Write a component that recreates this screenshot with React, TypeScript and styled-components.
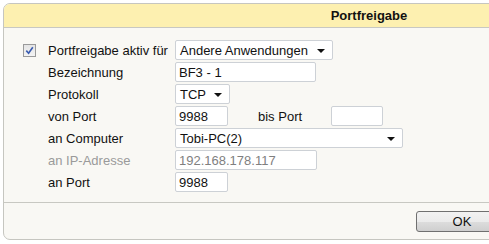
import React from "react";
import styled, { createGlobalStyle } from "styled-components";

const Global = createGlobalStyle`
  html, body { margin: 0; padding: 0; background: #ffffff; }
  body { font-family: "Liberation Sans", Arial, sans-serif; font-size: 13px; color: #000; }
`;

const Page = styled.div`
  width: 489px;
  height: 244px;
  overflow: hidden;
  padding: 3px 0 0 3px;
  box-sizing: border-box;
`;

const Panel = styled.div`
  width: 732px;
  height: 237px;
  box-sizing: border-box;
  border: 1px solid #c6c6c0;
  border-radius: 7px 7px 7px 7px;
  background: #f9f8f4;
  overflow: hidden;
  display: flex;
  flex-direction: column;
`;

const Header = styled.div`
  height: 23px;
  flex: none;
  background: #fdf0b0;
  border-bottom: 1px solid #c8c8c2;
  display: flex;
  align-items: center;
  justify-content: center;
  font-weight: bold;
  font-size: 13px;
  color: #111;
`;

const Body = styled.div`
  flex: 1;
  padding: 11px 0 0 19px;
  display: grid;
  grid-template-columns: 25px 127px auto;
  grid-auto-rows: 22px;
  align-content: start;
  border-bottom: 1px solid #c8c8c2;
`;

const CheckCell = styled.div`
  display: flex;
  align-items: center;
`;

const Box = styled.div`
  width: 11px;
  height: 11px;
  border: 1px solid #9a9a9a;
  background: linear-gradient(#e4e4e4, #f4f4f4);
  display: flex;
  align-items: center;
  justify-content: center;
`;

const Label = styled.div<{ $muted?: boolean }>`
  display: flex;
  align-items: center;
  color: ${(p) => (p.$muted ? "#9a9a9a" : "#111")};
  white-space: nowrap;
`;

const Controls = styled.div`
  display: flex;
  align-items: center;
`;

const Field = styled.div<{ $w: number; $muted?: boolean }>`
  width: ${(p) => p.$w}px;
  height: 20px;
  box-sizing: border-box;
  border: 1px solid #cdd1d6;
  border-radius: 2px;
  background: #ffffff;
  padding: 0 0 0 3px;
  display: flex;
  align-items: center;
  color: ${(p) => (p.$muted ? "#7f7f7f" : "#111")};
  white-space: nowrap;
`;

const Select = styled(Field)`
  padding: 0 7px 0 4px;
  justify-content: space-between;
`;

const Arrow = styled.span`
  width: 0;
  height: 0;
  border-left: 4px solid transparent;
  border-right: 4px solid transparent;
  border-top: 4px solid #111;
  margin-top: 1px;
`;

const InlineLabel = styled.span`
  width: 73px;
  margin-left: 30px;
  color: #111;
`;

const Footer = styled.div`
  height: 36px;
  display: flex;
  align-items: center;
  padding-left: 412px;
`;

const Button = styled.button`
  width: 92px;
  height: 21px;
  box-sizing: border-box;
  border: 1px solid #707070;
  border-radius: 3px;
  background: linear-gradient(#f2f2f2 0%, #ebebeb 50%, #dddddd 51%, #cfcfcf 100%);
  font-family: "Liberation Sans", Arial, sans-serif;
  font-size: 13px;
  color: #111;
  padding: 0;
  margin-top: 1px;
`;

const Empty = styled.div``;

export default function App() {
  return (
    <Page>
      <Global />
      <Panel>
        <Header>Portfreigabe</Header>
        <Body>
          <CheckCell>
            <Box>
              <svg width="9" height="9" viewBox="0 0 9 9">
                <path d="M1.3 4.6 L3.6 7.2 L7.8 1.2" fill="none" stroke="#3a5cb0" strokeWidth="1.6" />
              </svg>
            </Box>
          </CheckCell>
          <Label>Portfreigabe aktiv für</Label>
          <Controls>
            <Select $w={158}>
              Andere Anwendungen <Arrow />
            </Select>
          </Controls>

          <Empty />
          <Label>Bezeichnung</Label>
          <Controls>
            <Field $w={141}>BF3 - 1</Field>
          </Controls>

          <Empty />
          <Label>Protokoll</Label>
          <Controls>
            <Select $w={55}>
              TCP <Arrow />
            </Select>
          </Controls>

          <Empty />
          <Label>von Port</Label>
          <Controls>
            <Field $w={53}>9988</Field>
            <InlineLabel>bis Port</InlineLabel>
            <Field $w={52} />
          </Controls>

          <Empty />
          <Label>an Computer</Label>
          <Controls>
            <Select $w={228}>
              Tobi-PC(2) <Arrow />
            </Select>
          </Controls>

          <Empty />
          <Label $muted>an IP-Adresse</Label>
          <Controls>
            <Field $w={142} $muted>
              192.168.178.117
            </Field>
          </Controls>

          <Empty />
          <Label>an Port</Label>
          <Controls>
            <Field $w={53}>9988</Field>
          </Controls>
        </Body>
        <Footer>
          <Button>OK</Button>
        </Footer>
      </Panel>
    </Page>
  );
}
